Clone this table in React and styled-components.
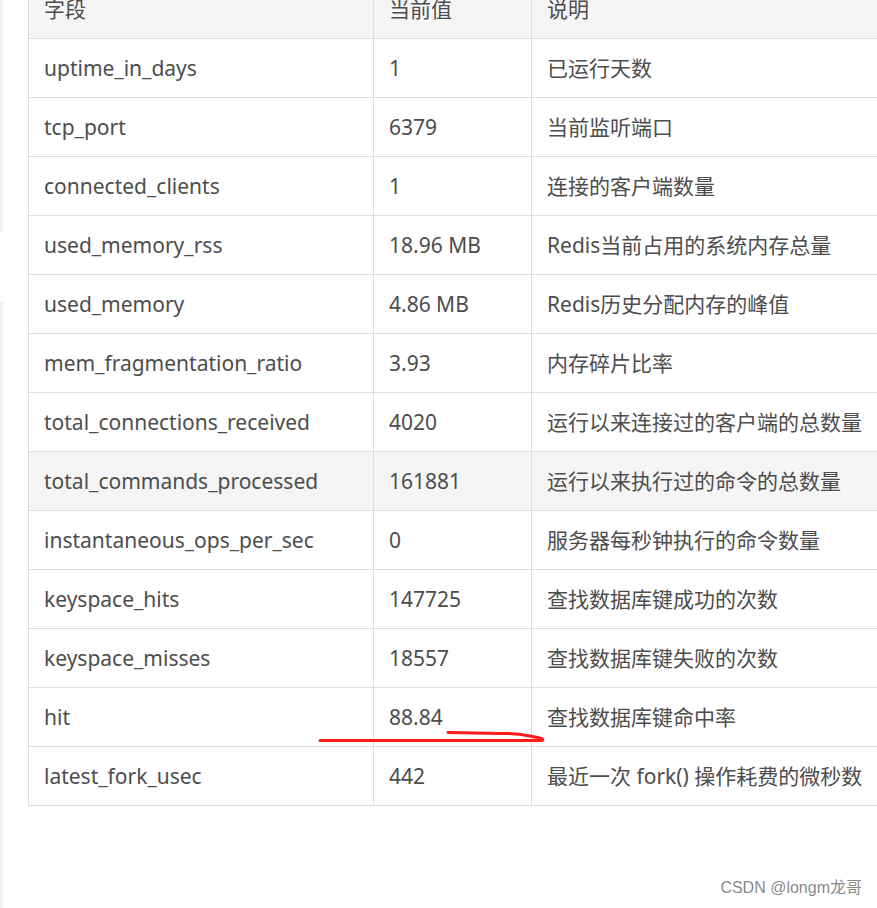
import React from 'react'
import styled, { createGlobalStyle } from 'styled-components'

const GlobalStyle = createGlobalStyle`
  html, body {
    margin: 0;
    padding: 0;
    overflow: hidden;
    background: #fff;
  }
  body {
    font-family: "Noto Sans", "Noto Sans CJK SC", sans-serif;
  }
`

const Page = styled.div`
  position: relative;
  display: flex;
  width: 877px;
  height: 908px;
  overflow: hidden;
`

const Rail = styled.div`
  display: flex;
  flex-direction: column;
  width: 3px;
  flex: none;
`

const RailPiece = styled.div`
  background: #f1f1f1;
  height: ${p => p.h}px;
  margin-top: ${p => p.gap || 0}px;
  flex: ${p => (p.fill ? '1' : 'none')};
`

const Content = styled.div`
  flex: 1;
  min-width: 0;
  overflow: hidden;
  display: flex;
  flex-direction: column;
  padding-left: 25px;
`

const Table = styled.table`
  border-collapse: collapse;
  width: 900px;
  flex: none;
  margin-top: -20px;
  font-size: 21px;
  color: #4d4d4d;
  table-layout: fixed;
`

const Th = styled.th`
  background: #f5f5f5;
  font-weight: normal;
  text-align: left;
  height: 58px;
  padding: 0 15px;
  border: 1px solid #dddddd;
  width: ${p => p.w}px;
  box-sizing: border-box;
  line-height: 1;
`

const Row = styled.tr`
  background: ${p => (p.hl ? '#f5f5f5' : '#fff')};
`

const Td = styled.td`
  height: 58px;
  padding: 0 15px;
  border: 1px solid #dddddd;
  white-space: nowrap;
  line-height: 1;
  vertical-align: middle;
`

const Watermark = styled.div`
  margin-top: auto;
  padding: 0 15px 10px 0;
  text-align: right;
  font-size: 16px;
  color: #8a8a8a;
  white-space: nowrap;
  font-family: "Liberation Sans", "Noto Sans CJK SC", sans-serif;
`

const Scribble = styled.svg`
  position: absolute;
  left: 0;
  top: 0;
  pointer-events: none;
`

const rows = [
  ['uptime_in_days', '1', '已运行天数'],
  ['tcp_port', '6379', '当前监听端口'],
  ['connected_clients', '1', '连接的客户端数量'],
  ['used_memory_rss', '18.96 MB', 'Redis当前占用的系统内存总量'],
  ['used_memory', '4.86 MB', 'Redis历史分配内存的峰值'],
  ['mem_fragmentation_ratio', '3.93', '内存碎片比率'],
  ['total_connections_received', '4020', '运行以来连接过的客户端的总数量'],
  ['total_commands_processed', '161881', '运行以来执行过的命令的总数量'],
  ['instantaneous_ops_per_sec', '0', '服务器每秒钟执行的命令数量'],
  ['keyspace_hits', '147725', '查找数据库键成功的次数'],
  ['keyspace_misses', '18557', '查找数据库键失败的次数'],
  ['hit', '88.84', '查找数据库键命中率'],
  ['latest_fork_usec', '442', '最近一次 fork() 操作耗费的微秒数'],
]

export default function App() {
  return (
    <>
      <GlobalStyle />
      <Page>
        <Rail>
          <RailPiece h={232} />
          <RailPiece gap={70} fill />
        </Rail>
        <Content>
          <Table>
            <thead>
              <tr>
                <Th w={345}>字段</Th>
                <Th w={158}>当前值</Th>
                <Th>说明</Th>
              </tr>
            </thead>
            <tbody>
              {rows.map(([k, v, d], i) => (
                <Row key={k} hl={i === 7}>
                  <Td>{k}</Td>
                  <Td>{v}</Td>
                  <Td>{d}</Td>
                </Row>
              ))}
            </tbody>
          </Table>
          <Watermark>CSDN @longm龙哥</Watermark>
        </Content>
        <Scribble width="877" height="908">
          <path d="M320 740.5 L541 740.5 Q545 740 540 738 L530 736 Q515 733 500 733.5 L448 732.5"
            fill="none" stroke="#ff1a1a" strokeWidth="3" strokeLinecap="round" strokeLinejoin="round" />
        </Scribble>
      </Page>
    </>
  )
}
